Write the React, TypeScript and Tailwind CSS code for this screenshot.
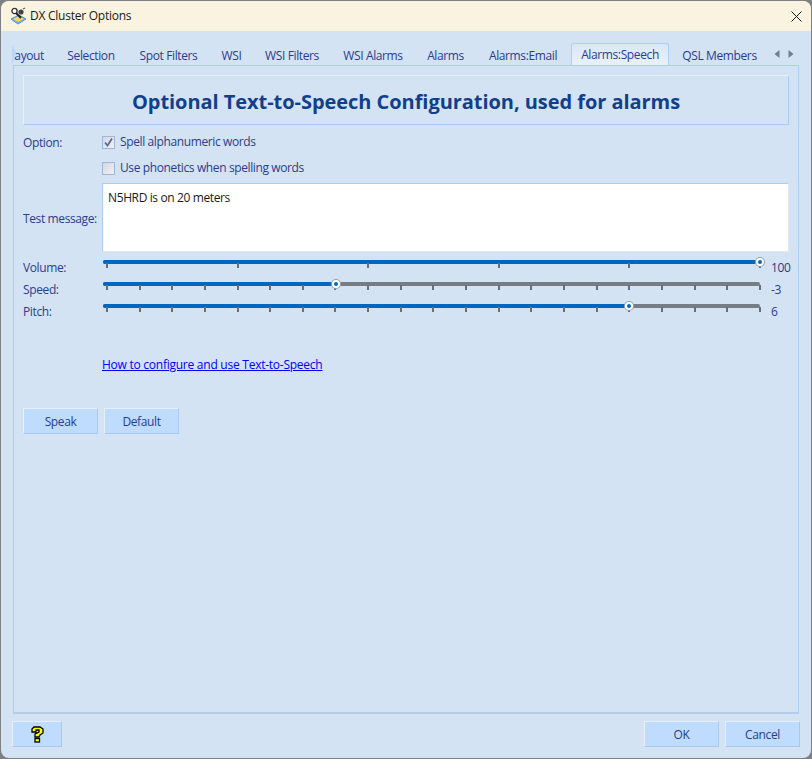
import { FC } from "react";

const FONT = "font-['Open_Sans','Noto_Sans',sans-serif]";

interface TabItem {
  label: string;
  width: string;
}

const tabs: TabItem[] = [
  { label: "Selection", width: "w-[72px]" },
  { label: "Spot Filters", width: "w-[83px]" },
  { label: "WSI", width: "w-[43px]" },
  { label: "WSI Filters", width: "w-[78px]" },
  { label: "WSI Alarms", width: "w-[84px]" },
  { label: "Alarms", width: "w-[61px]" },
  { label: "Alarms:Email", width: "w-[94px]" },
];

const AppIcon = () => (
  <svg width="17" height="18" viewBox="0 0 17 18">
    <path d="M1 12 L9 8 L16 12 L8 17 Z" fill="#6fb0e8" stroke="#3d7fc0" strokeWidth="0.8" />
    <path d="M3 12 L9 9 L14 12 L8 15 Z" fill="#f2d75c" />
    <circle cx="4.5" cy="4" r="2.6" fill="#fff" stroke="#333" strokeWidth="1.3" />
    <circle cx="11" cy="5" r="2.6" fill="#444" />
    <path d="M6 6 L11 11" stroke="#222" strokeWidth="2" />
    <path d="M13 2 L15 1" stroke="#555" strokeWidth="1.2" />
  </svg>
);

const HelpIcon = () => (
  <svg width="13" height="17" viewBox="0 0 13 17">
    <path
      d="M1 3 L3 1 L9 1 L12 3 L12 7 L9 9 L8 11 L4 11 L4 8 L8 6 L8 4 L5 4 L5 6 L1 6 Z"
      fill="#ffff00"
      stroke="#000"
      strokeWidth="1.3"
    />
    <rect x="4" y="12.5" width="4.5" height="3.5" fill="#ffff00" stroke="#000" strokeWidth="1.3" />
  </svg>
);

const Arrow: FC<{ left?: boolean }> = ({ left }) => (
  <svg width="6" height="8" viewBox="0 0 6 8">
    <path d={left ? "M5.5 0 V8 L0.5 4 Z" : "M0.5 0 V8 L5.5 4 Z"} fill="#6d7f94" />
  </svg>
);

const Button: FC<{ label?: string; width?: string; children?: React.ReactNode }> = ({
  label,
  width = "w-[75px]",
  children,
}) => (
  <button
    className={`h-[26px] ${width} pt-[1px] flex items-center justify-center bg-[#bfdcff] text-[12px] text-[#23408f] border border-[#a9c8ee] border-t-[#e6f0fb] border-l-[#e6f0fb]`}
  >
    {label}
    {children}
  </button>
);

const CheckRow: FC<{ label: string; checked?: boolean }> = ({ label, checked }) => (
  <div className="flex items-center gap-[5px] h-[16px]">
    <span className="w-[13px] h-[13px] bg-gradient-to-br from-[#d4d8df] to-[#f0f1f4] border border-[#9fb6d8] flex items-center justify-center">
      {checked && (
        <svg width="9" height="9" viewBox="0 0 9 9">
          <path d="M1 4.5 L3.5 7.5 L8 0.5" fill="none" stroke="#5a6a8a" strokeWidth="1.7" />
        </svg>
      )}
    </span>
    <span>{label}</span>
  </div>
);

interface SliderProps {
  label: string;
  value: string;
  position: number;
  intervals: number;
}

const Slider: FC<SliderProps> = ({ label, value, position, intervals }) => (
  <div className="flex h-[22px]">
    <div className="w-[80px] shrink-0 pt-[3px] leading-[16px]">{label}</div>
    <div className="relative w-[657px] shrink-0 h-[22px]">
      <div className="absolute left-0 right-0 top-[3px] h-[4px] rounded-[2px] bg-[#767d85]" />
      <div
        className="absolute left-0 top-[3px] h-[4px] rounded-l-[2px] bg-[#0067c0]"
        style={{ width: `${position * 100}%` }}
      />
      <div className="absolute left-[3px] -right-[1px] top-[6px] flex justify-between">
        {Array.from({ length: intervals + 1 }).map((_, i) => (
          <span key={i} className="w-[2px] h-[5px] bg-[#667079]" />
        ))}
      </div>
      <span
        className="absolute top-[1px] w-[8px] h-[8px] -ml-[4px] rounded-full bg-[#0067c0] border-[2px] border-white shadow-[0_0_0_1px_#9aa4ae]"
        style={{ left: `${position * 100}%` }}
      />
    </div>
    <div className="ml-[11px] pt-[3px] leading-[16px] whitespace-nowrap">{value}</div>
  </div>
);

export default function App() {
  return (
    <div className={`w-[812px] h-[759px] bg-[#7d8186] overflow-hidden text-[12px] tracking-[-0.38px] text-[#2b3b8f] ${FONT}`}>
      <div className="w-[810px] h-[757px] ml-[1px] mt-[1px] rounded-[8px] overflow-hidden flex flex-col bg-[#d4e3f3]">
        <header className="h-[30px] shrink-0 bg-[#f9f3e0] flex items-center pl-[9px] pr-[10px] text-[#1a1a1a] tracking-[-0.25px]">
          <AppIcon />
          <span className="ml-[3px] text-[12px]">DX Cluster Options</span>
          <svg className="ml-auto -mr-[1px]" width="11" height="11" viewBox="0 0 11 11">
            <path d="M0.5 0.5 L10.5 10.5 M10.5 0.5 L0.5 10.5" stroke="#1a1a1a" strokeWidth="1" />
          </svg>
        </header>

        <div className="flex-1 flex flex-col pl-[12px] pr-[12px]">
          <div className="relative h-[34px] flex items-end">
            <svg className="absolute -left-[1px] top-[14px]" width="4" height="20" viewBox="0 0 4 20">
              <path d="M0 0 L4 7 L0 20 Z" fill="#b9d6f7" />
            </svg>
            <div className="w-[42px] h-[22px] overflow-hidden flex items-center justify-end pr-[11px] pt-[3px]">
              <span>ayout</span>
            </div>
            {tabs.map((t) => (
              <div key={t.label} className={`${t.width} h-[22px] flex items-center justify-center pt-[3px]`}>
                {t.label}
              </div>
            ))}
            <div className="ml-[1px] w-[98px] h-[22px] rounded-t-[3px] border border-b-0 border-[#a9cdf5] bg-gradient-to-b from-[#d9e7f6] to-[#e9f1fb] flex items-center justify-center pt-[1px]">
              Alarms:Speech
            </div>
            <div className="ml-[1px] w-[99px] h-[22px] flex items-center justify-center pt-[3px]">
              QSL Members
            </div>
            <div className="flex items-center gap-[8px] h-[22px] pl-[5px]">
              <Arrow left />
              <Arrow />
            </div>
          </div>

          <div className="h-[649px] border border-[#a9cdf5] border-b-[2px] border-b-[#b4cdea] px-[9px] pt-[9px]">
            <div className="h-[50px] pt-[3px] border border-[#a9cdf5] border-t-[#e6f0fb] border-l-[#e6f0fb] flex items-center justify-center">
              <h1 className="text-[20px] font-bold tracking-[-0.05px] text-[#123f8c]">
                Optional Text-to-Speech Configuration, used for alarms
              </h1>
            </div>

            <div className="flex mt-[9px]">
              <div className="w-[79px]">Option:</div>
              <div className="flex flex-col gap-[10px]">
                <CheckRow label="Spell alphanumeric words" checked />
                <CheckRow label="Use phonetics when spelling words" />
              </div>
            </div>

            <div className="flex items-center mt-[7px] h-[69px]">
              <div className="w-[79px] pt-[3px] whitespace-nowrap">Test message:</div>
              <div className="flex-1 self-stretch bg-white border border-[#a9cdf5] border-b-[#dfe8f2] border-r-[#dfe8f2] px-[5px] pt-[6px] text-[#1a1a1a] leading-[16px]">
                N5HRD is on 20 meters
              </div>
            </div>

            <div className="mt-[5px]">
              <Slider label="Volume:" value="100" position={1} intervals={5} />
              <Slider label="Speed:" value="-3" position={0.355} intervals={20} />
              <Slider label="Pitch:" value="6" position={0.8} intervals={20} />
            </div>

            <div className="ml-[79px] mt-[33px]">
              <a href="#" className="text-[#0000ff] underline tracking-[-0.25px]">
                How to configure and use Text-to-Speech
              </a>
            </div>

            <div className="flex gap-[6px] mt-[34px]">
              <Button label="Speak" />
              <Button label="Default" />
            </div>
          </div>

          <div className="flex justify-between items-start mt-[7px] -mx-[1px]">
            <Button width="w-[50px]">
              <HelpIcon />
            </Button>
            <div className="flex gap-[6px]">
              <Button label="OK" />
              <Button label="Cancel" />
            </div>
          </div>
        </div>
      </div>
    </div>
  );
}
